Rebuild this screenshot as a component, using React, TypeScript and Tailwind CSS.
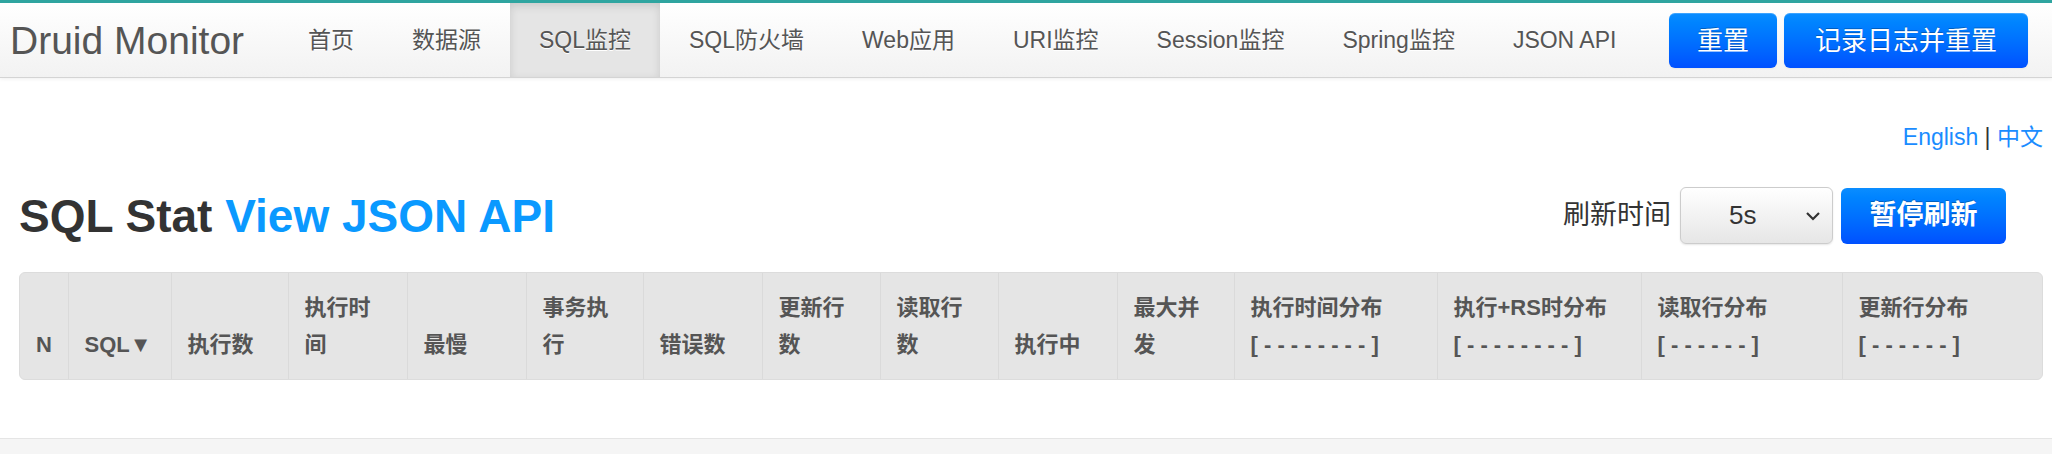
import React from "react";

const navItems = ["首页", "数据源", "SQL监控", "SQL防火墙", "Web应用", "URI监控", "Session监控", "Spring监控", "JSON API"];

const cols: { w: string; lines: string[] }[] = [
  { w: "w-[48px]", lines: ["N"] },
  { w: "w-[103px]", lines: ["SQL▼"] },
  { w: "w-[117px]", lines: ["执行数"] },
  { w: "w-[119px]", lines: ["执行时", "间"] },
  { w: "w-[119px]", lines: ["最慢"] },
  { w: "w-[117px]", lines: ["事务执", "行"] },
  { w: "w-[119px]", lines: ["错误数"] },
  { w: "w-[118px]", lines: ["更新行", "数"] },
  { w: "w-[118px]", lines: ["读取行", "数"] },
  { w: "w-[119px]", lines: ["执行中"] },
  { w: "w-[117px]", lines: ["最大并", "发"] },
  { w: "w-[203px]", lines: ["执行时间分布", "[ - - - - - - - - ]"] },
  { w: "w-[204px]", lines: ["执行+RS时分布", "[ - - - - - - - - ]"] },
  { w: "w-[201px]", lines: ["读取行分布", "[ - - - - - - ]"] },
  { w: "w-[202px]", lines: ["更新行分布", "[ - - - - - - ]"] },
];

export default function App() {
  return (
    <div className="min-h-[454px] bg-white font-[family-name:'Liberation_Sans','Noto_Sans_CJK_SC',sans-serif] flex flex-col">
      {/* Navbar */}
      <div className="border-t-[3px] border-[#2fa5a0] border-b border-b-[#d4d4d4] bg-gradient-to-b from-white to-[#f2f2f2] shadow-[0_1px_4px_rgba(0,0,0,0.065)]">
        <div className="flex items-stretch h-[74px]">
          <div className="flex items-center pl-[10px] text-[39px] text-[#555] leading-none w-[279px]">Druid Monitor</div>
          <ul className="flex items-stretch">
            {navItems.map((t) => {
              const active = t === "SQL监控";
              return (
                <li
                  key={t}
                  className={
                    active
                      ? "flex items-center px-[29px] text-[23px] text-[#555] bg-[#e5e5e5] shadow-[inset_0_3px_8px_rgba(0,0,0,0.125)] [text-shadow:0_1px_0_#fff]"
                      : "flex items-center px-[29px] text-[23px] text-[#555] [text-shadow:0_1px_0_#fff]"
                  }
                >
                  {t}
                </li>
              );
            })}
          </ul>
          <div className="ml-auto flex items-center gap-[7px] pr-[24px] pt-[1px]">
            <button className="h-[55px] px-[28px] rounded-[6px] bg-gradient-to-b from-[#0b8dff] to-[#0050ff] text-white text-[26px] leading-none [text-shadow:0_-1px_0_rgba(0,0,0,0.25)] shadow-[inset_0_1px_0_rgba(255,255,255,0.2),0_1px_2px_rgba(0,0,0,0.05)]">
              重置
            </button>
            <button className="h-[55px] px-[31px] rounded-[6px] bg-gradient-to-b from-[#0b8dff] to-[#0050ff] text-white text-[26px] leading-none [text-shadow:0_-1px_0_rgba(0,0,0,0.25)] shadow-[inset_0_1px_0_rgba(255,255,255,0.2),0_1px_2px_rgba(0,0,0,0.05)]">
              记录日志并重置
            </button>
          </div>
        </div>
      </div>

      {/* Content */}
      <div className="pl-[19px] pr-[9px] flex-1">
        <div className="mt-[44px] text-right text-[23px] leading-[30px]">
          <span className="text-[#1a8cff]">English</span>
          <span className="text-[#333]"> | </span>
          <span className="text-[#1a8cff]">中文</span>
        </div>

        <div className="mt-[35px] flex items-center justify-between">
          <h1 className="text-[46px] font-bold leading-[54px] text-[#333]">
            SQL Stat <span className="text-[#0a99ff]">View JSON API</span>
          </h1>
          <div className="flex items-center pr-[37px]">
            <span className="text-[27px] text-[#333] mr-[9px]">刷新时间</span>
            <div className="relative w-[153px] h-[57px] rounded-[6px] border border-[#ccc] bg-gradient-to-b from-white to-[#e6e6e6] shadow-[0_1px_2px_rgba(0,0,0,0.1)] flex items-center">
              <span className="ml-[48px] text-[26px] text-[#333]">5s</span>
              <svg className="absolute right-[10px] top-[20px]" width="18" height="16" viewBox="0 0 18 16">
                <path d="M3 5 L9 11 L15 5" fill="none" stroke="#333" strokeWidth="2.2" />
              </svg>
            </div>
            <button className="ml-[8px] w-[165px] h-[56px] rounded-[6px] bg-gradient-to-b from-[#0b8dff] to-[#0050ff] text-white text-[27px] font-bold leading-none [text-shadow:0_-1px_0_rgba(0,0,0,0.25)]">
              暂停刷新
            </button>
          </div>
        </div>

        <div className="mt-[28px] border border-[#dcdcdc] rounded-[6px] overflow-hidden bg-[#e5e5e5]">
          <table className="table-fixed w-full border-collapse">
            <thead>
              <tr>
                {cols.map((c, i) => (
                  <th
                    key={i}
                    className={
                      (i === 0 ? "" : "border-l border-[#dadada] ") +
                      c.w +
                      " px-[16px] py-[16px] align-bottom text-left font-bold text-[22px] leading-[37px] text-[#555] whitespace-nowrap"
                    }
                  >
                    {c.lines.map((l, j) => (
                      <div key={j}>{l}</div>
                    ))}
                  </th>
                ))}
              </tr>
            </thead>
          </table>
        </div>
      </div>

      <div className="mt-[58px] h-[16px] border-t border-[#e5e5e5] bg-[#f5f5f5]" />
    </div>
  );
}
